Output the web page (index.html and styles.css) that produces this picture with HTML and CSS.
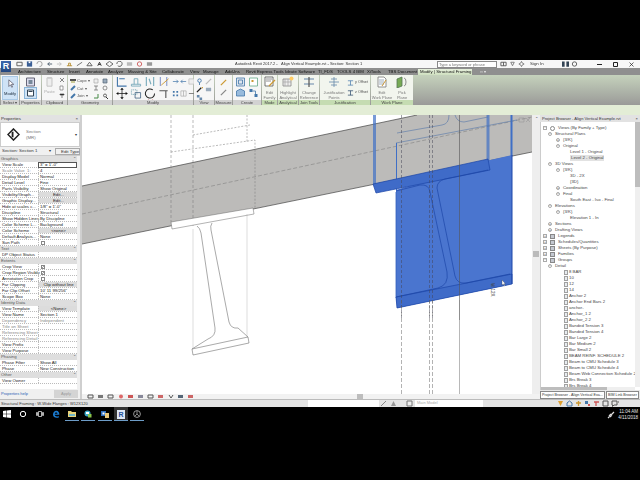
FILE: index.html
```html
<!DOCTYPE html>
<html lang="en">
<head>
<meta charset="utf-8">
<title>Autodesk Revit 2017.2</title>
<link rel="stylesheet" href="styles.css">
</head>
<body>
<div class="app">
  <div class="letterbox"></div>

  <header class="titlebar">
    <div class="logo">R</div>
    <div class="qat">
      <svg class="qi" viewBox="0 0 8 6"><path d="M1 1h6v4H1z" fill="none" stroke="#555"/></svg>
      <svg class="qi" viewBox="0 0 8 6"><path d="M1 0h6v6H1z" fill="#3b5f96"/><path d="M3 0h2v2H3z" fill="#fff"/></svg>
      <svg class="qi" viewBox="0 0 8 6"><path d="M1 3a3 3 0 1 1 3 3" fill="none" stroke="#999"/></svg>
      <svg class="qi" viewBox="0 0 8 6"><path d="M7 3H2M4 1 2 3l2 2" fill="none" stroke="#456"/></svg>
      <svg class="qi" viewBox="0 0 8 6"><path d="M1 3h5M4 1l2 2-2 2" fill="none" stroke="#bbb"/></svg>
      <svg class="qi" viewBox="0 0 8 6"><path d="M1 5h6M3 5V2h2v3" fill="none" stroke="#b58a2a"/></svg>
      <svg class="qi" viewBox="0 0 8 6"><path d="M1 5 7 1" stroke="#666" fill="none"/></svg>
      <svg class="qi" viewBox="0 0 8 6"><path d="M1 5l3-4 3 4z" fill="none" stroke="#555"/></svg>
      <svg class="qi" viewBox="0 0 8 6"><path d="M2 5 4 1l2 4M3 3.500h2" fill="none" stroke="#222"/></svg>
      <svg class="qi" viewBox="0 0 8 6"><path d="M4 0 8 3 4 6 0 3z" fill="none" stroke="#555"/></svg>
      <svg class="qi" viewBox="0 0 8 6"><path d="M1 3a3 3 0 1 1 1 2" fill="none" stroke="#555"/></svg>
      <svg class="qi" viewBox="0 0 8 6"><path d="M1 1h6v4H1z" fill="#bbb"/></svg>
      <svg class="qi" viewBox="0 0 8 6"><circle cx="4" cy="3" r="2.500" fill="none" stroke="#c55"/></svg>
      <svg class="qi" viewBox="0 0 8 6"><path d="M1 1h6v4H1z" fill="#999"/></svg>
    </div>
    <div class="doc-title">Autodesk Revit 2017.2 -&nbsp; &nbsp;Align Vertical Example.rvt - Section: Section 1</div>
    <div class="search">Type a keyword or phrase</div>
    <div class="help-tools">
      <svg class="qi" viewBox="0 0 8 6"><path d="M1 1h6v4H1zM4 1v4" fill="none" stroke="#555"/></svg>
      <svg class="qi" viewBox="0 0 8 6"><path d="M2 1h4L4 5z" fill="none" stroke="#777"/></svg>
      <svg class="qi" viewBox="0 0 8 6"><path d="M4 0l1 2 2 1-2 1-1 2-1-2-2-1 2-1z" fill="none" stroke="#777"/></svg>
      <span class="sign">Sign In</span>
      <svg class="qi" viewBox="0 0 8 6"><path d="M0 0h3v6H0zM5 0h3v6H5z" fill="#345"/></svg>
      <svg class="qi" viewBox="0 0 8 6"><circle cx="4" cy="3" r="2.500" fill="none" stroke="#555"/></svg>
    </div>
    <div class="winbtns">
      <svg class="wb" viewBox="0 0 5 5"><path d="M0 2.500h5" stroke="#222"/></svg>
      <svg class="wb" viewBox="0 0 5 5"><path d="M.5.500h4v4h-4z" fill="none" stroke="#222"/></svg>
      <svg class="wb" viewBox="0 0 5 5"><path d="M.5.500l4 4M4.500.500l-4 4" stroke="#222" stroke-width=".7"/></svg>
    </div>
  </header>

  <nav class="tabs">
    <span class="tab w-arch">Architecture</span>
    <span class="tab w-str">Structure</span>
    <span class="tab w-ins">Insert</span>
    <span class="tab w-ann">Annotate</span>
    <span class="tab w-anl">Analyze</span>
    <span class="tab w-mas">Massing &amp; Site</span>
    <span class="tab w-col">Collaborate</span>
    <span class="tab w-vie">View</span>
    <span class="tab w-man">Manage</span>
    <span class="tab w-add">Add-Ins</span>
    <span class="tab w-rev">Revit Express Tools</span>
    <span class="tab w-ide">Ideate Software</span>
    <span class="tab w-tif">TI_FDS</span>
    <span class="tab w-too">TOOLS 4 BIM</span>
    <span class="tab w-xit">XiTools</span>
    <span class="tab w-tbs">TBS Document</span>
    <span class="tab tab-active">Modify | Structural Framing</span>
    <span class="tab w-dot">▫▫ ▾</span>
  </nav>

  <section class="ribbon">
    <div class="panel p-select">
      <div class="pb modify-btn">
        <svg class="ic-big" viewBox="0 0 10 12"><path d="M3 1v8l2-2 1.500 3 1-.5L6 6.500h3z" fill="#fff" stroke="#667"/></svg>
        <span>Modify</span>
      </div>
      <div class="pl">Select ▾</div>
    </div>
    <div class="panel p-props">
      <div class="pb stack">
        <svg class="ic-m" viewBox="0 0 10 10"><path d="M1 1h8v8H1z" fill="#dde" stroke="#667"/><path d="M3 3h4v4H3z" fill="#789"/></svg>
        <svg class="ic-m active" viewBox="0 0 10 10"><path d="M2 2h6v6H2z" fill="#fff" stroke="#345"/><path d="M3 3h4v1H3z" fill="#345"/></svg>
      </div>
      <div class="pl">Properties</div>
    </div>
    <div class="panel p-clip">
      <div class="pb row">
        <div class="big-tool muted">
          <svg class="ic-big" viewBox="0 0 10 12"><path d="M2 1h6v10H2z" fill="#eee" stroke="#bbb"/><path d="M3 0h4v2H3z" fill="#ccc"/></svg>
          <span>Paste</span>
        </div>
        <div class="stack tight">
          <svg class="ic-s" viewBox="0 0 6 6"><path d="M1 1l4 4M5 1 1 5" stroke="#555" stroke-width=".7"/></svg>
          <svg class="ic-s" viewBox="0 0 6 6"><path d="M1 1h3v4H1z" fill="#fff" stroke="#777" stroke-width=".7"/></svg>
          <svg class="ic-s" viewBox="0 0 6 6"><path d="M1 1h4v1H1zM3 2v3" stroke="#555" stroke-width=".7"/></svg>
        </div>
      </div>
      <div class="pl">Clipboard</div>
    </div>
    <div class="panel p-geo">
      <div class="pb geo-grid">
        <div class="geo-item"><svg class="ic-s" viewBox="0 0 6 6"><path d="M0 1h6v2H0z" fill="#555"/><path d="M1 3h4v2H1z" fill="#cc9"/></svg>Cope ▾</div>
        <svg class="ic-s" viewBox="0 0 6 6"><path d="M1 1h4v4H1z" fill="#eee" stroke="#aaa" stroke-width=".7"/></svg>
        <svg class="ic-s" viewBox="0 0 6 6"><path d="M1 1h4v4H1z" fill="#9ab" stroke="#567" stroke-width=".7"/></svg>
        <div class="geo-item"><svg class="ic-s" viewBox="0 0 6 6"><path d="M1 5 5 1" stroke="#47a" stroke-width="2"/></svg>Cut ▾</div>
        <svg class="ic-s" viewBox="0 0 6 6"><path d="M1 1h4M1 5h4M3 1v4" stroke="#666" stroke-width=".7"/></svg>
        <svg class="ic-s" viewBox="0 0 6 6"><path d="M1 3a2 2 0 1 1 4 0 2 2 0 0 1-4 0" fill="none" stroke="#666" stroke-width=".7"/></svg>
        <div class="geo-item"><svg class="ic-s" viewBox="0 0 6 6"><path d="M1 5 5 1" stroke="#47a" stroke-width="2"/></svg>Join ▾</div>
        <svg class="ic-s" viewBox="0 0 6 6"><path d="M1 5h4V1" fill="none" stroke="#484"/></svg>
        <svg class="ic-s" viewBox="0 0 6 6"><circle cx="3" cy="2.500" r="1.500" fill="none" stroke="#333" stroke-width=".7"/><path d="M4 4l2 2" stroke="#333"/></svg>
      </div>
      <div class="pl">Geometry</div>
    </div>
    <div class="panel p-modify">
      <div class="pb modify-grid">
        <svg class="ic-l" viewBox="0 0 12 12"><path d="M1 1v10h10M3 3h6" fill="none" stroke="#47a" stroke-width="1.200"/></svg>
        <svg class="ic-l" viewBox="0 0 12 12"><path d="M1 9h10v2H1zM4 9V3h4v6" fill="none" stroke="#7ab" stroke-width="1"/></svg>
        <svg class="ic-l" viewBox="0 0 12 12"><path d="M2 1v10M10 1v10M5 3l2 6" fill="none" stroke="#7ab" stroke-width="1.200"/></svg>
        <svg class="ic-l" viewBox="0 0 12 12"><path d="M2 1v10M9 1v10" fill="none" stroke="#89c" stroke-width="1.200"/><path d="M3 10 11 3" stroke="#c93"/></svg>
        <svg class="ic-s2" viewBox="0 0 8 8"><path d="M1 4h6M5 2l2 2-2 2" fill="none" stroke="#47a" stroke-width=".8"/></svg>
        <svg class="ic-s2" viewBox="0 0 8 8"><path d="M7 4H1M3 2 1 4l2 2" fill="none" stroke="#47a" stroke-width=".8"/></svg>
        <svg class="ic-s2" viewBox="0 0 8 8"><path d="M1 1h6v6H1z" fill="#eee" stroke="#bbb" stroke-width=".8"/></svg>
        <svg class="ic-l" viewBox="0 0 12 12"><path d="M6 0v12M0 6h12" stroke="#111" stroke-width=".8"/><path d="M6 0 4 2h4zM6 12l-2-2h4zM0 6l2-2v4zM12 6l-2-2v4z" fill="#111"/></svg>
        <svg class="ic-l" viewBox="0 0 12 12"><path d="M1 2h6v5H1z" fill="none" stroke="#69a" stroke-dasharray="1 1"/><path d="M5 5h6v6H5z" fill="none" stroke="#357" stroke-width=".8"/></svg>
        <svg class="ic-l" viewBox="0 0 12 12"><path d="M9 2a5 5 0 1 0 2 4" fill="none" stroke="#222" stroke-width="1.100"/></svg>
        <svg class="ic-l" viewBox="0 0 12 12"><path d="M1 3h9M8 3v8" fill="none" stroke="#555" stroke-width="1.200"/></svg>
        <svg class="ic-s2" viewBox="0 0 8 8"><path d="M1 1h2v2H1zM5 1h2v2H5zM1 5h2v2H1zM5 5h2v2H5z" fill="#47a"/></svg>
        <svg class="ic-s2" viewBox="0 0 8 8"><path d="M1 1h6v6H1zM4 1v6" fill="none" stroke="#aaa" stroke-width=".8"/></svg>
        <svg class="ic-s2" viewBox="0 0 8 8"><path d="M1 4h6" stroke="#777"/></svg>
        <svg class="ic-s2" viewBox="0 0 8 8"><path d="M1 6h6M4 1v5" fill="none" stroke="#246" stroke-width="1.100"/></svg>
        <svg class="ic-s2" viewBox="0 0 8 8"><path d="M1 6h6M4 1v5" fill="none" stroke="#4a6" stroke-width="1.100"/></svg>
        <svg class="ic-s2" viewBox="0 0 8 8"><path d="M1 1l6 6M7 1 1 7" stroke="#c22" stroke-width="1.500"/></svg>
      </div>
      <div class="pl">Modify</div>
    </div>
    <div class="panel p-view">
      <div class="pb view-grid">
        <svg class="ic-s2" viewBox="0 0 8 8"><circle cx="4" cy="3" r="2" fill="none" stroke="#47a"/><path d="M4 5v3" stroke="#47a"/></svg>
        <svg class="ic-s2" viewBox="0 0 8 8"><path d="M1 7 7 1" stroke="#bbb" stroke-width="1.500"/></svg>
        <svg class="ic-s2" viewBox="0 0 8 8"><path d="M1 7 6 2" stroke="#222" stroke-width="1.500"/><path d="M6 1h2v2" fill="#c93"/></svg>
        <svg class="ic-s2" viewBox="0 0 8 8"><path d="M1 2h6v4H1z" fill="#9ab"/></svg>
        <svg class="ic-s2" viewBox="0 0 8 8"><path d="M1 1h3v3H1zM4 4h3v3H4z" fill="#68a"/></svg>
      </div>
      <div class="pl">View</div>
    </div>
    <div class="panel p-meas">
      <div class="pb stack mid">
        <svg class="ic-s2" viewBox="0 0 8 8"><path d="M1 7 7 1" stroke="#c93" stroke-width="1.500"/></svg>
        <svg class="ic-s2" viewBox="0 0 8 8"><path d="M1 7 7 1" stroke="#888" stroke-width="1.500"/></svg>
      </div>
      <div class="pl">Measure</div>
    </div>
    <div class="panel p-create">
      <div class="pb create-grid">
        <svg class="ic-m2" viewBox="0 0 10 10"><path d="M1 1h8v8H1z" fill="#dfe6ef" stroke="#47a" stroke-width=".8"/><path d="M3 3h4v4H3z" fill="none" stroke="#47a" stroke-width=".8"/></svg>
        <svg class="ic-m2" viewBox="0 0 10 10"><path d="M1 1h8v8H1z" fill="#fff" stroke="#6a8" stroke-width=".8"/><path d="M3 3h2v2H3z" fill="#c93"/></svg>
        <svg class="ic-m2" viewBox="0 0 10 10"><path d="M1 3l4-2 4 2v5H1z" fill="#9bd" stroke="#47a" stroke-width=".8"/></svg>
        <svg class="ic-m2" viewBox="0 0 10 10"><path d="M1 1h3v3H1zM6 6h3v3H6z" fill="#47a"/><path d="M4 3h3v3" fill="none" stroke="#47a" stroke-width=".8"/></svg>
      </div>
      <div class="pl">Create</div>
    </div>
    <div class="panel green p-mode">
      <div class="pb tool">
        <svg class="ic-t" viewBox="0 0 12 12"><path d="M1 1h8v9H1z" fill="#fff" stroke="#555" stroke-width=".8"/><path d="M2 3h6M2 5h5" stroke="#777" stroke-width=".8"/><path d="M5 10l6-6" stroke="#c93" stroke-width="1.300"/></svg>
        <span>Edit<br>Family</span>
      </div>
      <div class="pl">Mode</div>
    </div>
    <div class="panel green p-anal">
      <div class="pb tool">
        <svg class="ic-t" viewBox="0 0 12 12"><path d="M1 3h8v7H1z" fill="#eee" stroke="#888" stroke-width=".8"/><path d="M3 3v7M6 3v7M1 6h8" stroke="#aaa" stroke-width=".8"/><circle cx="9.500" cy="2.500" r="2" fill="#fc6"/></svg>
        <span>Highlight<br>Analytical</span>
      </div>
      <div class="pl">Analytical</div>
    </div>
    <div class="panel green p-join">
      <div class="pb tool">
        <svg class="ic-t" viewBox="0 0 12 12"><path d="M1 3h10M1 8h10" stroke="#68a" stroke-width="1.200"/><path d="M6 1v10" stroke="#555" stroke-width="1.200"/></svg>
        <span>Change<br>Reference</span>
      </div>
      <div class="pl">Join Tools</div>
    </div>
    <div class="panel green p-just">
      <div class="pb row just">
        <div class="tool">
          <svg class="ic-t" viewBox="0 0 12 12"><path d="M1 6h10M6 1v10M3 3h6M3 9h6" stroke="#68a" stroke-width=".8"/></svg>
          <span>Justification<br>Points</span>
        </div>
        <div class="stack offsets">
          <div class="off"><svg class="ic-s2" viewBox="0 0 8 8"><path d="M1 2h6M4 2v5M1 7h6" stroke="#47a" fill="none" stroke-width=".8"/></svg>y Offset</div>
          <div class="off"><svg class="ic-s2" viewBox="0 0 8 8"><path d="M1 2h6M4 2v5M1 7h6" stroke="#246" fill="none" stroke-width=".8"/></svg>z Offset</div>
        </div>
      </div>
      <div class="pl">Justification</div>
    </div>
    <div class="panel green p-work">
      <div class="pb row work">
        <div class="tool">
          <svg class="ic-t" viewBox="0 0 12 12"><path d="M2 1h6l2 2v8H2z" fill="#fff" stroke="#777" stroke-width=".8"/><path d="M3 4h5M3 6h5M3 8h5" stroke="#89a" stroke-width=".8"/><path d="M6 10l4-6" stroke="#c93"/></svg>
          <span>Edit<br>Work Plane</span>
        </div>
        <div class="tool">
          <svg class="ic-t" viewBox="0 0 12 12"><path d="M1 3l5-2v9l-5 2z" fill="#7a5" stroke="#575" stroke-width=".8"/><path d="M8 2a2 4 0 1 1 0 8" fill="none" stroke="#777" stroke-width=".8"/></svg>
          <span>Pick<br>Plane</span>
        </div>
      </div>
      <div class="pl">Work Plane</div>
    </div>
    <div class="ribbon-fill"></div>
  </section>

  <div class="options-strip"></div>

  <main class="workspace">
    <aside class="props">
      <div class="pane-head"><span>Properties</span><span>×</span></div>
      <div class="type-sel">
        <svg class="type-icon" viewBox="0 0 14 14"><path d="M7 1 13 7 7 13 1 7z" fill="#fff" stroke="#222" stroke-width="1.600"/><path d="M5 4h2v6H5z" fill="#222"/></svg>
        <span class="type-name">Section<br>(MR)</span>
        <span class="type-arrow">▾</span>
      </div>
      <div class="edit-row"><span class="inst">Section: Section 1</span><span class="chev">▾</span><span class="edit-type">Edit Type</span></div>
      <div class="plist">
        <div class="ph"><span>Graphics</span><span>⌃</span></div>
        <div class="pr"><span>View Scale</span><span class="val boxed">3" = 1'-0"</span></div>
        <div class="pr"><span class="dim">Scale Value&nbsp; 1:</span><span class="val">4</span></div>
        <div class="pr"><span>Display Model</span><span class="val">Normal</span></div>
        <div class="pr"><span>Detail Level</span><span class="val">Fine</span></div>
        <div class="pr"><span>Parts Visibility</span><span class="val">Show Original</span></div>
        <div class="pr"><span>Visibility/Graph...</span><span class="val btn">Edit...</span></div>
        <div class="pr"><span>Graphic Display...</span><span class="val btn">Edit...</span></div>
        <div class="pr"><span>Hide at scales c...</span><span class="val">1/8" = 1'-0"</span></div>
        <div class="pr"><span>Discipline</span><span class="val">Structural</span></div>
        <div class="pr"><span>Show Hidden Lines</span><span class="val">By Discipline</span></div>
        <div class="pr"><span>Color Scheme L...</span><span class="val">Background</span></div>
        <div class="pr"><span>Color Scheme</span><span class="val btn">&lt;none&gt;</span></div>
        <div class="pr"><span>Default Analysis...</span><span class="val">None</span></div>
        <div class="pr"><span>Sun Path</span><span class="val"><i class="cb"></i></span></div>
        <div class="ph"><span>Text</span><span>⌃</span></div>
        <div class="pr"><span>DP Object Status</span><span class="val"></span></div>
        <div class="ph"><span>Extents</span><span>⌃</span></div>
        <div class="pr"><span>Crop View</span><span class="val"><i class="cb on"></i></span></div>
        <div class="pr"><span>Crop Region Visible</span><span class="val"><i class="cb on"></i></span></div>
        <div class="pr"><span>Annotation Crop</span><span class="val"><i class="cb"></i></span></div>
        <div class="pr"><span>Far Clipping</span><span class="val btn">Clip without line</span></div>
        <div class="pr"><span>Far Clip Offset</span><span class="val">10' 11 99/256"</span></div>
        <div class="pr"><span>Scope Box</span><span class="val">None</span></div>
        <div class="ph"><span>Identity Data</span><span>⌃</span></div>
        <div class="pr"><span>View Template</span><span class="val btn">&lt;None&gt;</span></div>
        <div class="pr"><span>View Name</span><span class="val">Section 1</span></div>
        <div class="pr"><span class="dim">Dependency</span><span class="val dim">Independent</span></div>
        <div class="pr"><span class="dim">Title on Sheet</span><span class="val"></span></div>
        <div class="pr"><span class="dim">Referencing Sheet</span><span class="val"></span></div>
        <div class="pr"><span class="dim">Referencing Detail</span><span class="val"></span></div>
        <div class="pr"><span>View Prefix</span><span class="val"></span></div>
        <div class="pr"><span>View Purpose</span><span class="val"></span></div>
        <div class="ph"><span>Phasing</span><span>⌃</span></div>
        <div class="pr"><span>Phase Filter</span><span class="val">Show All</span></div>
        <div class="pr"><span>Phase</span><span class="val">New Construction</span></div>
        <div class="ph"><span>Other</span><span>⌃</span></div>
        <div class="pr"><span>View Owner</span><span class="val"></span></div>
        <div class="pscroll"></div>
      </div>
      <div class="props-foot"><span class="help-link">Properties help</span><span class="apply">Apply</span></div>
    </aside>

    <section class="viewport">
      <div class="drawing-wrap">
        <svg class="drawing" viewBox="82 115 450 279" preserveAspectRatio="none">
          <rect x="82" y="115" width="450" height="279" fill="#fff"/>
          <polygon points="82,186 417,115 532,115 532,152 82,244" fill="#bcbbb9"/>
          <path d="M82 186 417 115M82 244 532 152" stroke="#444" stroke-width=".7" fill="none"/>
          <path d="M82 214 532 117" stroke="#777" stroke-width=".5" stroke-dasharray="4 2" fill="none"/>

          <g fill="none" stroke="#777" stroke-width=".5">
            <path d="M171 115V222M193 115V226" stroke-dasharray="3 2"/>
            <path d="M171 152 255 140V208M247 115V142" stroke-dasharray="2 1.500"/>
            <path d="M193 135 250 125" stroke-dasharray="2 1.500"/>
          </g>
          <polygon points="171,222 253,208 254,214 172,229" fill="#fff" stroke="#666" stroke-width=".5"/>
          <path d="M197 226 212 223 230 326 248 337 192 349 215 331Z" fill="#fff"/>
          <path d="M197 226Q200 228 201 233L215 328Q216 336 208 339L192 349M212 223Q210 226 211 230L229 322Q231 329 238 328L248 337" fill="none" stroke="#555" stroke-width=".5"/>
          <polygon points="192,349 248,337 249,343 193,355" fill="#fff" stroke="#555" stroke-width=".5"/>
          <path d="M193 229V349M247 214V337" stroke="#aaa" stroke-width=".4" fill="none"/>

          <g stroke="#3f6fc6" fill="none">
            <path d="M374.500 115V184" stroke-width="3" opacity=".7"/>
            <path d="M488 115V170" stroke-width="3" opacity=".7"/>
            <path d="M511.500 115V156" stroke-width="2"/>
            <path d="M396.500 143V192" stroke-width="1"/>
            <path d="M396 143 517 120" stroke-width=".6" stroke="#5577aa"/>
            <path d="M397 133 442 125Q449 124 449 115M455 115Q457 122 464 122L488 117" stroke-width=".6" stroke="#5577aa"/>
          </g>

          <polygon points="396,190 490,160 512,155 512,284 397,308 396,298" fill="#4a75cf"/>
          <polygon points="373,184 488,159 490,170 376,193" fill="#3f6bc8" stroke="#1d46a8" stroke-width=".7"/>
          <polygon points="396,297 512,274 512,284 397,308" fill="#3f6bc8" stroke="#1d46a8" stroke-width=".7"/>
          <path d="M512 155V284" stroke="#1d46a8" stroke-width="1"/>
          <path d="M396 192V298" stroke="#3461bd" stroke-width=".8"/>
          <path d="M396 191 420 185Q429 184 430 192L447 272Q449 285 438 288L396 297" fill="none" stroke="#1d46a8" stroke-width=".7"/>
          <path d="M488 170 445 179Q437 181 437 188L455 276Q457 284 466 283L510 274" fill="none" stroke="#1d46a8" stroke-width=".7"/>

          <path d="M401.500 115V320" stroke="#445" stroke-width=".5" stroke-dasharray="3 2" fill="none"/>
          <path d="M429.500 115V320M432.500 115V320" stroke="#445" stroke-width=".5" stroke-dasharray="3 2" fill="none"/>
          <path d="M459.500 115V320" stroke="#555" stroke-width=".6" fill="none"/>
          <path d="M401.500 300V394M429.500 300V394M432.500 300V394" stroke="#666" stroke-width=".5" stroke-dasharray="4 2" fill="none"/>
          <path d="M459.500 300V394" stroke="#888" stroke-width=".6" fill="none"/>

          <text class="tag" transform="translate(491 283) rotate(90)">W 12X</text>
          <path d="M502 280v5l1.200-1 1 2 .7-.4-1-1.800h1.500z" fill="#fff" stroke="#333" stroke-width=".3"/>
          <path d="M519 118h5v4h-5zM526 118l4 4M530 118l-4 4" stroke="#999" stroke-width=".6" fill="none"/>
        </svg>
        <div class="vscroll"><span class="vs-arrow">⌃</span><span class="vs-thumb"></span></div>
      </div>
      <div class="view-bar">
        <span class="vb-icons">
          <svg class="vb-ic" viewBox="0 0 8 5"><path d="M1 1h5v3H1z" fill="none" stroke="#555"/></svg>
          <svg class="vb-ic" viewBox="0 0 8 5"><path d="M1 1h5v3H1z" fill="#777"/></svg>
          <svg class="vb-ic" viewBox="0 0 8 5"><path d="M1 1h5v3H1z" fill="none" stroke="#555"/></svg>
          <svg class="vb-ic" viewBox="0 0 8 5"><circle cx="4" cy="2.500" r="2" fill="#d66"/></svg>
          <svg class="vb-ic" viewBox="0 0 8 5"><path d="M1 1h5v3H1z" fill="#c55"/></svg>
          <svg class="vb-ic" viewBox="0 0 8 5"><path d="M1 1h5v3H1z" fill="#889"/></svg>
          <svg class="vb-ic" viewBox="0 0 8 5"><path d="M1 1h5v3H1z" fill="none" stroke="#555"/></svg>
          <svg class="vb-ic" viewBox="0 0 8 5"><path d="M1 1h5v3H1z" fill="#c66"/></svg>
          <svg class="vb-ic" viewBox="0 0 8 5"><path d="M2 1l2 3 2-3" fill="none" stroke="#555"/></svg>
          <svg class="vb-ic" viewBox="0 0 8 5"><path d="M1 1h5v3H1z" fill="#567"/></svg>
          <svg class="vb-ic" viewBox="0 0 8 5"><path d="M1 1h5v3H1z" fill="#c66"/></svg>
        </span>
        <span class="hs-thumb"></span>
      </div>
    </section>

    <aside class="browser">
      <div class="pane-head b-head"><span>Project Browser - Align Vertical Example.rvt</span><span>×</span></div>
      <div class="tree">
        <div class="t l0"><i class="ex">−</i><i class="ti eye"></i>Views (By Family + Type)</div>
        <div class="t l1"><i class="ex round">−</i>Structural Plans</div>
        <div class="t l2"><i class="ex round">+</i>{3/K}</div>
        <div class="t l2"><i class="ex round">−</i>Original</div>
        <div class="t l3">Level 1 - Original</div>
        <div class="t l3"><span class="sel">Level 2 - Original</span></div>
        <div class="t l1"><i class="ex round">−</i>3D Views</div>
        <div class="t l2"><i class="ex round">−</i>{3/K}</div>
        <div class="t l3">3D - 2X</div>
        <div class="t l3">{3D}</div>
        <div class="t l2"><i class="ex round">+</i>Coordination</div>
        <div class="t l2"><i class="ex round">−</i>Final</div>
        <div class="t l3">South East - Iso - Final</div>
        <div class="t l1"><i class="ex round">−</i>Elevations</div>
        <div class="t l2"><i class="ex round">−</i>{3/K}</div>
        <div class="t l3">Elevation 1 - In</div>
        <div class="t l1"><i class="ex round">+</i>Sections</div>
        <div class="t l1"><i class="ex round">+</i>Drafting Views</div>
        <div class="t l0"><i class="ex">+</i><i class="ti"></i>Legends</div>
        <div class="t l0"><i class="ex">+</i><i class="ti"></i>Schedules/Quantities</div>
        <div class="t l0"><i class="ex">+</i><i class="ti"></i>Sheets (By Purpose)</div>
        <div class="t l0"><i class="ex">+</i><i class="ti"></i>Families</div>
        <div class="t l0"><i class="ex">−</i><i class="ti"></i>Groups</div>
        <div class="t l1"><i class="ex round">−</i>Detail</div>
        <div class="t g"><i class="gi"></i>8 BAR</div>
        <div class="t g"><i class="gi"></i>10</div>
        <div class="t g"><i class="gi"></i>12</div>
        <div class="t g"><i class="gi"></i>14</div>
        <div class="t g"><i class="gi"></i>Anchor 2</div>
        <div class="t g"><i class="gi"></i>Anchor End Bars 2</div>
        <div class="t g"><i class="gi"></i>anchor-</div>
        <div class="t g"><i class="gi"></i>Anchor_1 2</div>
        <div class="t g"><i class="gi"></i>Anchor_2 2</div>
        <div class="t g"><i class="gi"></i>Banded Tension 3</div>
        <div class="t g"><i class="gi"></i>Banded Tension 4</div>
        <div class="t g"><i class="gi"></i>Bar Large 2</div>
        <div class="t g"><i class="gi"></i>Bar Medium 2</div>
        <div class="t g"><i class="gi"></i>Bar Small 2</div>
        <div class="t g"><i class="gi"></i>BEAM REINF. SCHEDULE 2</div>
        <div class="t g"><i class="gi"></i>Beam to CMU Schedule 3</div>
        <div class="t g"><i class="gi"></i>Beam to CMU Schedule 4</div>
        <div class="t g"><i class="gi"></i>Beam Web Connection Schedule 2</div>
        <div class="t g"><i class="gi"></i>Brs Break 3</div>
        <div class="t g"><i class="gi"></i>Brs Break 4</div>
        <div class="tree-scroll"></div>
        <div class="tree-hscroll"></div>
      </div>
      <div class="b-tabs"><span class="b-tab b-tab-1">Project Browser - Align Vertical Exa...</span><span class="b-tab b-tab-2">BIM Link Browser</span></div>
    </aside>
  </main>

  <footer class="status">
    <span class="st-text">Structural Framing : W-Wide Flanges : W12X120</span>
    <span class="st-field"></span>
    <span class="st-icons">
      <svg class="st-ic" viewBox="0 0 7 7"><path d="M1 6 6 1" stroke="#888"/></svg>
      <svg class="st-ic" viewBox="0 0 7 7"><path d="M3.500 1 6 6H1z" fill="#999"/></svg>
      <svg class="st-ic gap" viewBox="0 0 7 7"><path d="M1 1h5v5H1z" fill="#eee" stroke="#777"/></svg>
      <svg class="st-ic" viewBox="0 0 7 7"><path d="M1 1h5v5H1z" fill="#777"/></svg>
    </span>
    <span class="st-model">Main Model</span>
    <span class="st-right">
      <svg class="st-ic" viewBox="0 0 7 7"><path d="M1 1h5L3.500 6z" fill="#e0a030"/></svg>
      <svg class="st-ic" viewBox="0 0 7 7"><path d="M1 6V3l2.500-2L6 3v3z" fill="none" stroke="#47a"/></svg>
      <svg class="st-ic" viewBox="0 0 7 7"><path d="M1 3h5M3.500 1v5" stroke="#c93" stroke-width="1.300"/></svg>
      <svg class="st-ic" viewBox="0 0 7 7"><path d="M1 1h3v3H1z" fill="#47a"/><path d="M4 4h2v2H4z" fill="#c55"/></svg>
      <svg class="st-ic" viewBox="0 0 7 7"><path d="M1 2h5M3 2v4" stroke="#c55" stroke-width="1.300"/></svg>
      <svg class="st-ic" viewBox="0 0 7 7"><path d="M1 1h5v5H1z" fill="none" stroke="#555"/></svg>
      <svg class="st-ic wide" viewBox="0 0 9 7"><path d="M1 1h5v4H3L1.500 6.500V5H1zM7 2h1" fill="none" stroke="#555"/></svg>
    </span>
  </footer>

  <div class="taskbar">
    <div class="task-left">
      <span class="task"><svg class="tk" viewBox="0 0 8 8"><path d="M0 1l3.500-.5V3.700H0zM4 .4 8 0v3.700H4zM0 4.200h3.500v3.300L0 7zM4 4.200h4V8l-4-.5z" fill="#fff"/></svg></span>
      <span class="task"><svg class="tk" viewBox="0 0 8 8"><circle cx="4" cy="4" r="2.700" fill="none" stroke="#fff"/></svg></span>
      <span class="task"><svg class="tk" viewBox="0 0 8 8"><path d="M2.500 1.500h3v5h-3zM.5 2.500h1v3h-1zM6.500 2.500h1v3h-1z" fill="none" stroke="#ddd" stroke-width=".8"/></svg></span>
      <span class="task"><svg class="tk" viewBox="0 0 8 8"><path d="M1 4.500C1 2 3 .6 4.500.8 6.500 1 7.500 2.800 7.300 4.800H2.700C3 6.500 5 7 6.800 6V7.400C4 8.500.8 7.300 1 4.500ZM2.800 3.700H5.500C5.300 2 3 2 2.800 3.700Z" fill="#1b7bd0"/></svg></span>
      <span class="task open"><svg class="tk" viewBox="0 0 8 8"><path d="M0 1h3l1 1h4v5H0z" fill="#e8d27a"/><path d="M1 4h6v2H1z" fill="#6fb5c8"/></svg></span>
      <span class="task open"><svg class="tk" viewBox="0 0 8 8"><circle cx="3.500" cy="3.500" r="3" fill="#3fa9c9"/><path d="M4 4h3.500v3.500H4z" fill="#8ac24a"/><path d="M2 2h3v2H2z" fill="#fff"/></svg></span>
      <span class="task open"><svg class="tk" viewBox="0 0 8 8"><path d="M0 1h5v5H0z" fill="#2f6ec0"/><path d="M4 3h4v5H4z" fill="#e9c77b"/><path d="M1.500 2.500h2v2h-2z" fill="#fff"/></svg></span>
      <span class="task active"><span class="rv">R</span></span>
      <span class="task open"><svg class="tk" viewBox="0 0 8 8"><circle cx="4" cy="4" r="3.400" fill="none" stroke="#bbb" stroke-width=".8"/><path d="M4 1v3l2 2M4 4 2 6" fill="none" stroke="#bbb" stroke-width=".7"/></svg></span>
    </div>
    <div class="tray">
      <svg class="tk" viewBox="0 0 8 8"><path d="M1 7 3 5M3 3l2 2M4 4l3-3M2 4l2 2" stroke="#ddd" stroke-width="1.200"/></svg>
      <div class="clock">11:04 AM<br>4/11/2018</div>
    </div>
  </div>
</div>
</body>
</html>
```

FILE: styles.css
```css
* { box-sizing: border-box; }
html, body { margin: 0; padding: 0; background: #000; }
body { width: 640px; height: 480px; overflow: hidden; font-family: "Liberation Sans", Arial, sans-serif; font-size: 4.400px; line-height: 6px; color: #333; }
i { font-style: normal; }
.app { width: 640px; height: 480px; display: flex; flex-direction: column; filter: blur(.35px); }
.letterbox { height: 60px; background: #000; flex: none; }

/* title bar */
.titlebar { height: 8px; flex: none; background: #f7f7f7; display: flex; align-items: center; position: relative; padding-left: 16px; }
.logo { position: absolute; left: 1px; top: 1px; width: 10px; height: 11px; background: linear-gradient(#3c67ad, #23477f); color: #fff; font: bold 9px/11px "Liberation Sans", sans-serif; text-align: center; z-index: 2; }
.qat { display: flex; gap: 3px; width: 150px; flex: none; }
.qi { width: 7px; height: 6px; flex: none; }
.doc-title { width: 198px; margin-left: 69px; flex: none; white-space: nowrap; color: #333; font-size: 4px; }
.search { width: 60px; height: 7px; margin-left: 4px; flex: none; background: #fff; border: 1px solid #8a8a8a; line-height: 5px; padding-left: 1px; color: #777; font-size: 4px; white-space: nowrap; overflow: hidden; }
.help-tools { display: flex; align-items: center; gap: 2px; margin-left: 3px; flex: none; width: 97px; }
.sign { width: 33px; padding-left: 3px; font-size: 4.400px; }
.winbtns { display: flex; gap: 11px; flex: none; }
.wb { width: 5px; height: 5px; }

/* tabs */
.tabs { height: 7px; flex: none; background: #8f8f8f; display: flex; align-items: center; padding-left: 18px; color: #111; font-size: 4.300px; white-space: nowrap; }
.tab { flex: none; display: block; line-height: 6px; }
.w-arch { width: 29px; } .w-str { width: 22px; } .w-ins { width: 17px; } .w-ann { width: 22px; }
.w-anl { width: 20px; } .w-mas { width: 34px; } .w-col { width: 28px; } .w-vie { width: 13px; }
.w-man { width: 22px; } .w-add { width: 21px; } .w-rev { width: 39px; } .w-ide { width: 33px; }
.w-tif { width: 19px; } .w-too { width: 30px; } .w-xit { width: 21px; } .w-tbs { width: 30px; }
.tab-active { width: 54px; height: 6px; align-self: flex-end; background: linear-gradient(#e6f0dc, #cfe0c0); padding-left: 2px; }
.w-dot { width: 20px; padding-left: 8px; color: #eee; font-size: 4px; }

/* ribbon */
.ribbon { height: 30px; flex: none; display: flex; background: linear-gradient(#c5d2bc, #9a9a98); padding-left: 1px; }
.panel { flex: none; display: flex; flex-direction: column; background: #f6f6f6; margin-right: 1px; }
.panel.green { background: #f2f5ee; }
.pb { height: 25px; flex: none; font-size: 4.100px; line-height: 5px; color: #555; }
.pl { height: 5px; line-height: 5px; font-size: 4.100px; text-align: center; background: #d2d2d2; color: #444; white-space: nowrap; overflow: hidden; }
.green .pl { background: #c5dcb2; }
.p-select { width: 18px; } .p-props { width: 21px; } .p-clip { width: 25px; } .p-geo { width: 44px; }
.p-modify { width: 80px; } .p-view { width: 20px; } .p-meas { width: 17px; } .p-create { width: 28px; }
.p-mode { width: 15px; } .p-anal { width: 20px; } .p-join { width: 20px; } .p-just { width: 50px; } .p-work { width: 42px; margin-right: 0; }
.ribbon-fill { flex: 1; }
.modify-btn { background: #cfe3f6; border: 1px solid #a9c9e6; margin: 1px 1px 0; height: 24px; display: flex; flex-direction: column; align-items: center; gap: 2px; padding-top: 2px; color: #234; }
.ic-big { width: 9px; height: 10px; }
.stack { display: flex; flex-direction: column; align-items: center; gap: 1px; padding-top: 2px; }
.ic-m { width: 11px; height: 10px; }
.ic-m.active { background: #cfe3f6; outline: 1px solid #8ab4d8; }
.row { display: flex; align-items: flex-start; }
.big-tool { width: 15px; display: flex; flex-direction: column; align-items: center; padding-top: 2px; gap: 2px; }
.muted { color: #aaa; }
.tight { gap: 2px; padding-top: 2px; flex: 1; }
.ic-s { width: 6px; height: 6px; flex: none; }
.geo-grid { display: grid; grid-template-columns: 23px 9px 9px; grid-auto-rows: 7.500px; padding: 2px 0 0 2px; align-items: center; }
.geo-item { display: flex; align-items: center; gap: 1px; white-space: nowrap; }
.modify-grid { display: grid; grid-template-columns: repeat(4, 14px) repeat(3, 8px); grid-template-rows: 11.500px 11.500px; gap: 0; padding: 1px 0 0 2px; align-items: center; justify-items: center; }
.ic-l { width: 12px; height: 11px; }
.ic-s2 { width: 7px; height: 7px; flex: none; }
.view-grid { display: grid; grid-template-columns: 9px 9px; grid-auto-rows: 8px; padding: 2px 0 0 1px; justify-items: center; align-items: center; }
.mid { padding-top: 4px; gap: 3px; }
.create-grid { display: grid; grid-template-columns: 13px 13px; grid-auto-rows: 11.500px; padding: 1px 0 0 1px; justify-items: center; align-items: center; }
.ic-m2 { width: 11px; height: 10px; }
.tool { display: flex; flex-direction: column; align-items: center; text-align: center; padding-top: 1px; gap: 2px; white-space: nowrap; font-size: 4px; color: #777; }
.ic-t { width: 12px; height: 12px; }
.just { padding-left: 1px; }
.just > .tool { width: 26px; }
.offsets { padding-top: 4px; gap: 3px; align-items: flex-start; }
.off { display: flex; align-items: center; gap: 1px; white-space: nowrap; font-size: 3.800px; }
.work > .tool { width: 22px; }
.work > .tool + .tool { width: 18px; }
.options-strip { height: 10px; flex: none; background: #e3edd6; }

/* workspace */
.workspace { height: 284px; flex: none; display: grid; grid-template-columns: 80px 460px 100px; background: #f0f0f0; }
.props { display: flex; flex-direction: column; background: #f6f6f6; min-height: 0; }
.pane-head { height: 7px; flex: none; display: flex; justify-content: space-between; padding: 0 2px 0 1px; line-height: 7px; background: #e2e2e2; font-size: 4.400px; color: #333; white-space: nowrap; }
.type-sel { height: 25px; flex: none; display: flex; align-items: center; background: #fff; border: 1px solid #ccc; padding-left: 6px; }
.type-icon { width: 13px; height: 13px; flex: none; }
.type-name { margin-left: 6px; color: #777; flex: 1; }
.type-arrow { margin-right: 2px; font-size: 4px; color: #333; }
.edit-row { height: 9px; flex: none; display: flex; align-items: center; padding-left: 2px; background: #f0f0f0; border-bottom: 1px solid #ccc; white-space: nowrap; }
.inst { width: 47px; flex: none; }
.chev { width: 6px; font-size: 4px; flex: none; }
.edit-type { flex: 1; border: 1px solid #aaa; height: 7px; line-height: 5px; padding-left: 5px; white-space: nowrap; margin-right: 1px; }
.plist { position: relative; flex: 1; background: #fff; padding-right: 3px; min-height: 0; }
.ph { height: 6px; display: flex; justify-content: space-between; background: #dedede; padding: 0 1px; line-height: 6px; font-size: 4.300px; color: #555; }
.pr { height: 6px; display: grid; grid-template-columns: 38px 1fr; border-bottom: 1px dotted #bbb; line-height: 5px; font-size: 4.300px; color: #222; white-space: nowrap; }
.pr > span:first-child { padding-left: 2px; }
.val { border-left: 1px dotted #bbb; padding-left: 1px; }
.val.boxed { border: 1px solid #555; height: 6px; line-height: 4px; }
.val.btn { background: #dcdcdc; text-align: center; }
.pr .dim { color: #888; }
.cb { display: block; width: 4px; height: 4px; border: 1px solid #888; background: #fff; margin: .5px 0 0 1px; }
.cb.on { background: linear-gradient(135deg, #fff 40%, #777 45%, #fff 60%); }
.pscroll { position: absolute; right: 0; top: 0; bottom: 0; width: 3px; background: #f0f0f0; }
.props-foot { height: 10px; flex: none; display: flex; justify-content: space-between; align-items: center; padding: 0 2px 0 1px; background: #f0f0f0; font-size: 4px; }
.help-link { color: #2a62b5; white-space: nowrap; }
.apply { width: 24px; height: 8px; background: #d4d4d4; color: #999; text-align: center; line-height: 8px; }

.viewport { display: flex; flex-direction: column; padding-left: 2px; background: #cfcfcf; min-height: 0; }
.drawing-wrap { height: 279px; flex: none; display: grid; grid-template-columns: 450px 8px; }
.drawing { display: block; width: 450px; height: 279px; }
.tag { font: 4.500px "Liberation Sans", sans-serif; fill: #444; }
.vscroll { position: relative; background: #eee; color: #444; text-align: center; }
.vs-arrow { display: block; font-size: 4px; line-height: 8px; }
.vs-thumb { position: absolute; left: 1px; right: 1px; top: 136px; height: 6px; background: #bbb; }
.view-bar { height: 5px; flex: none; display: flex; align-items: center; background: #f2f2f2; padding-left: 5px; }
.vb-icons { display: flex; gap: 2px; width: 270px; flex: none; }
.vb-ic { width: 8px; height: 5px; flex: none; }
.hs-thumb { width: 6px; height: 5px; background: #bdbdbd; }

.browser { display: flex; flex-direction: column; background: #f0f0f0; min-height: 0; }
.b-head { font-size: 4.100px; padding-left: 2px; }
.tree { position: relative; flex: 1; background: #fff; min-height: 0; overflow: hidden; padding-top: 3px; border-left: 1px solid #ccc; }
.t { height: 6px; line-height: 6px; font-size: 4.300px; color: #444; white-space: nowrap; display: flex; align-items: center; }
.l0 { padding-left: 2px; } .l1 { padding-left: 7px; } .l2 { padding-left: 15px; } .l3 { padding-left: 29px; } .g { padding-left: 23px; }
.ex { width: 4px; height: 4px; border: 1px solid #aaa; font-size: 3.500px; line-height: 2px; text-align: center; margin-right: 3px; flex: none; color: #555; }
.ex.round { border-radius: 50%; margin-right: 3px; }
.ti { width: 5px; height: 5px; background: #c4c8d0; border: 1px solid #888; margin-right: 3px; flex: none; }
.ti.eye { background: #fff; border-radius: 50%; }
.gi { width: 4px; height: 5px; border: 1px solid #a0a0a0; background: #e8ecf0; margin-right: 1px; flex: none; }
.sel { background: #e2e2e2; padding: 0 1px; }
.tree-scroll { position: absolute; right: 0; top: 0; bottom: 3px; width: 5px; background: linear-gradient(#bdbdbd 65px, #efefef 65px); }
.tree-hscroll { position: absolute; left: 0; right: 5px; bottom: 0; height: 3px; background: linear-gradient(90deg, #bdbdbd 70%, #efefef 70%); }
.b-tabs { height: 9px; flex: none; display: flex; gap: 1px; padding: 1px 1px 0 0; font-size: 3.700px; white-space: nowrap; background: #e8e8e8; }
.b-tab { height: 8px; line-height: 6px; border: 1px solid #888; background: #fff; overflow: hidden; padding-left: 1px; }
.b-tab-1 { width: 65px; }
.b-tab-2 { flex: 1; }

/* status */
.status { height: 8px; flex: none; background: #e4e4e4; display: flex; align-items: center; border-top: 1px solid #bbb; padding-left: 1px; font-size: 4px; white-space: nowrap; }
.st-text { width: 307px; flex: none; }
.st-field { width: 71px; height: 7px; background: #fff; flex: none; }
.st-icons { display: flex; gap: 3px; margin-left: 1px; width: 35px; flex: none; }
.st-ic { width: 7px; height: 7px; flex: none; }
.st-ic.gap { margin-left: 6px; }
.st-ic.wide { width: 9px; }
.st-model { width: 68px; height: 7px; background: #fff; color: #aaa; padding-left: 2px; flex: none; }
.st-right { display: flex; gap: 2px; margin-left: auto; margin-right: 20px; flex: none; }

/* taskbar */
.taskbar { flex: 1; background: #000; display: flex; justify-content: space-between; align-items: flex-start; }
.task-left { display: flex; height: 14px; gap: 2.300px; }
.task { width: 14px; height: 14px; display: flex; align-items: center; justify-content: center; flex: none; }
.tk { width: 8px; height: 8px; flex: none; }
.task.open { box-shadow: inset 0 -1px 0 #6d9cc7; }
.task.active { background: #333; box-shadow: inset 0 -1px 0 #6d9cc7; }
.rv { width: 8px; height: 9px; background: #dfe8f5; color: #24509a; font: bold 7px/9px "Liberation Sans", sans-serif; text-align: center; }
.tray { display: flex; align-items: center; gap: 3px; color: #e8e8e8; padding: 2px 2px 0 0; }
.clock { text-align: right; font-size: 4.500px; line-height: 6px; white-space: nowrap; }
```
